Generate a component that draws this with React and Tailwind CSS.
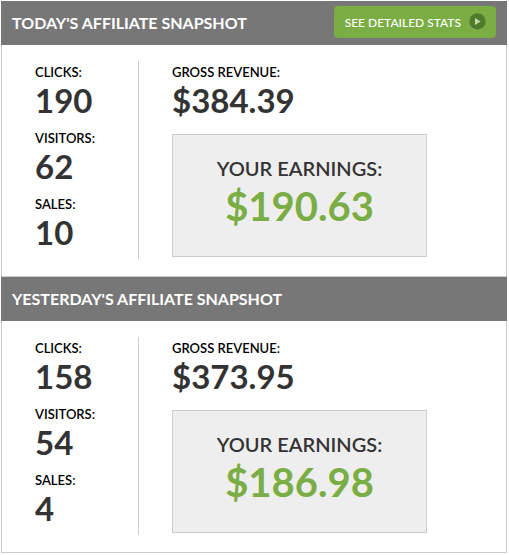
function Stat({ label, value }) {
  return (
    <div>
      <dt className="text-[13px] leading-5 text-black">{label}</dt>
      <dd className="pb-0.5 text-[33px] leading-9 font-bold">{value}</dd>
    </div>
  );
}

function Snapshot({ title, stats, revenue, earnings, action }) {
  return (
    <section>
      <header className="flex h-11 items-center justify-between bg-[#777777] px-[11px]">
        <h2 className="text-[16px] font-bold text-white">{title}</h2>
        {action}
      </header>
      <div className="flex border-x border-b border-[#cccccc] px-[33px] pt-4 pb-[17px]">
        <dl className="flex w-[104px] shrink-0 flex-col gap-2 border-r border-[#cccccc] pt-px pb-[7px]">
          {stats.map(([label, value]) => (
            <Stat key={label} label={label} value={value} />
          ))}
        </dl>
        <div className="ml-[33px] w-[255px] pt-px">
          <dl>
            <Stat label="GROSS REVENUE:" value={revenue} />
          </dl>
          <div className="mt-3.5 border border-[#cccccc] bg-[#eeeeee] pt-[19px] pb-[26px] text-center">
            <p className="text-[20px] leading-7">YOUR EARNINGS:</p>
            <p className="text-[40px] leading-[48px] font-bold text-[#7aad44]">{earnings}</p>
          </div>
        </div>
      </div>
    </section>
  );
}

export default function App() {
  return (
    <main className="mt-px mr-0.5 ml-px bg-white font-['Lato',sans-serif] font-semibold text-[#333333]">
      <Snapshot
        title="TODAY'S AFFILIATE SNAPSHOT"
        stats={[["CLICKS:", "190"], ["VISITORS:", "62"], ["SALES:", "10"]]}
        revenue="$384.39"
        earnings="$190.63"
        action={
          <button className="mb-0.5 flex h-8 items-center gap-2 rounded-sm bg-[#7aad44] pt-0.5 pr-2.5 pl-[11px] text-[12px] font-medium text-white">
            SEE DETAILED STATS
            <svg className="mb-1 size-[17px]" viewBox="0 0 17 17" aria-hidden="true">
              <circle cx="8.5" cy="9" r="8" fill="#9bc373" />
              <circle cx="8.5" cy="8.5" r="8.2" fill="#4f7c2a" />
              <path d="M6 5l5.5 3.5L6 12z" fill="#c3dba9" />
            </svg>
          </button>
        }
      />
      <Snapshot
        title="YESTERDAY'S AFFILIATE SNAPSHOT"
        stats={[["CLICKS:", "158"], ["VISITORS:", "54"], ["SALES:", "4"]]}
        revenue="$373.95"
        earnings="$186.98"
      />
    </main>
  );
}
